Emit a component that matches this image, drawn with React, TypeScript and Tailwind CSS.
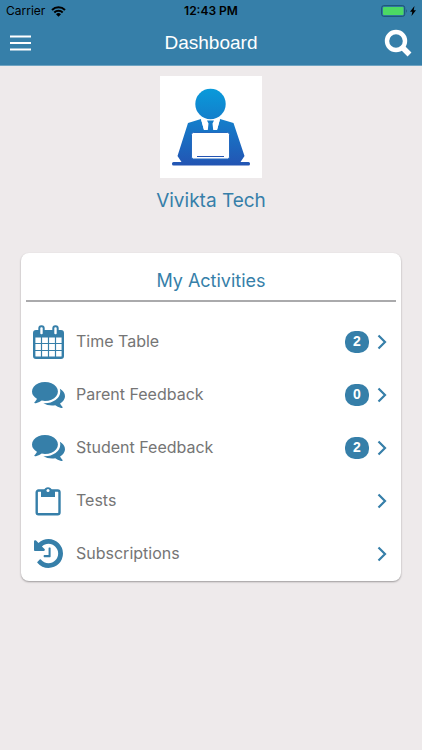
import React from "react";

type Activity = {
  label: string;
  icon: React.ReactNode;
  count?: number;
};

const CalendarIcon = () => (
  <svg viewBox="0 0 31 34" className="w-[31px] h-[34px]" aria-hidden="true">
    <rect x="1.2" y="6.2" width="28.6" height="26.6" rx="1.8" fill="white" stroke="currentColor" strokeWidth="2.4" />
    <path d="M1 6h29v6.500H1z" fill="currentColor" />
    <path d="M8.500 12v20M15.500 12v20M22.500 12v20M2 18.500h27M2 25.500h27" stroke="currentColor" strokeWidth="1.200" />
    <rect x="6.300" y="1.200" width="4.400" height="9" rx="2" fill="white" stroke="currentColor" strokeWidth="2" />
    <rect x="20.300" y="1.200" width="4.400" height="9" rx="2" fill="white" stroke="currentColor" strokeWidth="2" />
  </svg>
);

const CommentsIcon = () => (
  <svg viewBox="0 256 1792 1408" className="w-[33px] h-[26px] shrink-0" fill="currentColor" aria-hidden="true">
    <path d="M1408 768q0 139-94 257t-256.500 186.500T704 1280q-86 0-176-16-124 88-278 128-36 9-86 16h-3q-11 0-20.500-8t-11.500-21q-1-3-1-6.500t.5-6.500 2-6l2.500-5 3.500-5.500 4-5 4.500-5 4-4.500q5-6 23-25t26-29.500 22.500-29 25-38.500 20.500-44q-124-72-195-177T0 768q0-139 94-257t256.500-186.500T704 256t353.500 68.500T1314 511t94 257z" />
    <path d="M1792 1024q0 120-71 224.500T1526 1425q10 24 20.500 44t25 38.500 22.500 29 26 29.500 23 25q1 1 4 4.500t4.500 5 4 5 3.500 5.500l2.500 5 2 6 .5 6.500-1 6.500q-3 14-13 22t-22 7q-50-7-86-16-154-40-278-128-90 16-176 16-271 0-472-132 58 4 88 4 161 0 309-45t264-129q125-92 192-212t67-254q0-77-23-152 129 71 204 178t75 230z" />
  </svg>
);

const ClipboardIcon = () => (
  <svg viewBox="0 0 26 30" className="w-[26px] h-[30px]" aria-hidden="true">
    <rect x="1.700" y="4.500" width="22.800" height="23.800" rx="1.800" fill="none" stroke="currentColor" strokeWidth="2.400" />
    <path d="M6 4h3.200a4 4 0 0 1 7.600 0H20v7H6z" fill="currentColor" />
    <circle cx="13" cy="4.600" r="1.500" fill="white" />
  </svg>
);

const HistoryIcon = () => (
  <svg viewBox="0 128 1536 1536" className="w-[29px] h-[29px]" fill="currentColor" aria-hidden="true">
    <path d="M1536 896q0 156-61 298t-164 245-245 164-298 61q-172 0-327-72.500T177 1387q-7-10-6.500-22.500T179 1344l137-138q10-9 25-9 16 2 23 12 73 95 179 147t225 52q104 0 198.500-40.500T1130 1258t109.500-163.500T1280 896t-40.500-198.500T1130 534 966.500 424.500 768 384q-98 0-188 35.500T420 521l137 138q31 30 14 69-17 40-59 40H64q-26 0-45-19T0 704V256q0-42 40-59 39-17 69 14l130 129q107-101 244.500-156.500T768 128q156 0 298 61t245 164 164 245 61 298z" />
    <path d="M880 608v448q0 32-32 32H544q-32 0-32-32v-44q0-32 32-32h228V608q0-32 32-32h44q32 0 32 32z" />
  </svg>
);

const ChevronIcon = () => (
  <svg viewBox="0 0 10 16" className="w-[10px] h-[16px]" aria-hidden="true">
    <path d="M1.500 1.500L8 8l-6.500 6.500" fill="none" stroke="currentColor" strokeWidth="2.200" />
  </svg>
);

const ProfilePicture = () => (
  <svg viewBox="0 0 102 102" className="w-[102px] h-[102px] bg-white" role="img" aria-label="Profile picture">
    <defs>
      <linearGradient id="person" gradientUnits="userSpaceOnUse" x1="0" y1="12" x2="0" y2="90">
        <stop offset="0" stopColor="#099bdb" />
        <stop offset="1" stopColor="#2354b3" />
      </linearGradient>
    </defs>
    <g fill="url(#person)">
      <circle cx="50.500" cy="28" r="15.200" />
      <path d="M28 47l13-4 3 11h13l3-11 13.500 4 11 33-4 6H21.500l-4-6z" />
      <rect x="12" y="86" width="78" height="3.500" rx="1.500" />
    </g>
    <path d="M41 43.200l5.500 1.300 1.500 3-1 6.500h-3zM60 43.200l-5.500 1.300-1.500 3 1 6.500h3z" fill="white" />
    <path d="M47 44.500h7l-1.500 3 1 9h-6l1-9z" fill="url(#person)" />
    <rect x="31.500" y="56.500" width="38" height="26.500" rx="2" fill="white" stroke="#2369bf" strokeWidth="1" />
    <path d="M37 80.500h27" stroke="#2354b3" strokeWidth="1" />
  </svg>
);

const activities: Activity[] = [
  { label: "Time Table", icon: <CalendarIcon />, count: 2 },
  { label: "Parent Feedback", icon: <CommentsIcon />, count: 0 },
  { label: "Student Feedback", icon: <CommentsIcon />, count: 2 },
  { label: "Tests", icon: <ClipboardIcon /> },
  { label: "Subscriptions", icon: <HistoryIcon /> },
];

function StatusBar() {
  return (
    <div className="grid grid-cols-3 items-center h-[22px] px-[6px] text-black text-[12px] font-['Inter',sans-serif]">
      <div className="flex items-center gap-[6px]">
        <span>Carrier</span>
        <svg viewBox="0 0 15 11" className="w-[15px] h-[11px]" aria-hidden="true">
          <path d="M1 4a9.200 9.200 0 0 1 13 0M3.300 6.500a6 6 0 0 1 8.400 0" fill="none" stroke="currentColor" strokeWidth="2" />
          <path d="M7.500 10.700L5 8.200a3.500 3.500 0 0 1 5 0z" fill="currentColor" />
        </svg>
      </div>
      <span className="text-center font-semibold">12:43 PM</span>
      <div className="flex items-center justify-end gap-[2px]">
        <svg viewBox="0 0 27 12" className="w-[27px] h-3" aria-hidden="true">
          <rect x="0.700" y="0.700" width="23" height="10.600" rx="2" fill="none" stroke="#1b4f70" strokeWidth="1" />
          <rect x="2" y="2" width="20.500" height="8" rx="1" fill="#4cd964" />
          <path d="M25 4q1.500 2 0 4z" fill="#1b4f70" />
        </svg>
        <svg viewBox="0 0 6 10" className="w-[6px] h-[10px]" aria-hidden="true">
          <path d="M4.500 0L0 5.800h2.300L1.500 10 6 4.200H3.700z" fill="currentColor" />
        </svg>
      </div>
    </div>
  );
}

export default function App() {
  return (
    <div className="min-h-screen w-full bg-[#eeeaeb] text-[#367fa9] font-['Inter',sans-serif]">
      {/* Header */}
      <header className="bg-[#367fa9] text-white border-b border-[#6fa4c2]">
        <StatusBar />
        <div className="flex items-center justify-between h-[43px] px-[10px] pb-[2px]">
          <button type="button" aria-label="Menu" className="w-7">
            <svg viewBox="0 0 21 16" className="w-[21px] h-4">
              <path d="M0 1.500h21M0 8h21M0 14.500h21" stroke="currentColor" strokeWidth="2" />
            </svg>
          </button>
          <h1 className="text-[19px] leading-6 font-['Liberation_Sans',sans-serif]">Dashboard</h1>
          <button type="button" aria-label="Search" className="w-7">
            <svg viewBox="0 0 28 28" className="w-7 h-7" fill="none" stroke="currentColor">
              <circle cx="12" cy="12" r="9" strokeWidth="4.400" />
              <path d="M18 18l7.500 7.500" strokeWidth="5.500" />
            </svg>
          </button>
        </div>
      </header>

      <main className="px-[21px]">
        {/* Profile */}
        <section className="flex flex-col items-center pt-[10px]">
          <ProfilePicture />
          <h2 className="mt-[9px] text-[19px] leading-7">Vivikta Tech</h2>
        </section>

        {/* Activities */}
        <section className="mt-[38px] bg-white rounded-lg shadow-[0_1px_2px_rgba(0,0,0,0.35)]">
          <div className="px-[5px]">
            <h3 className="pt-[14px] pb-[5px] text-center text-[18px] leading-7 border-b-2 border-[#aaaaac]">
              My Activities
            </h3>
          </div>
          <ul className="pt-[13px] pb-px">
            {activities.map((item) => (
              <li key={item.label}>
                <button type="button" className="flex items-center w-full h-[53px] pl-[11px] pr-[14px] text-left">
                  <span className="flex justify-center w-8 shrink-0">{item.icon}</span>
                  <span className="flex-1 ml-3 pb-[2px] text-[16px] leading-6 text-[#757575]">{item.label}</span>
                  {item.count !== undefined && (
                    <span className="flex items-center justify-center w-6 h-[22px] mr-2 rounded-[10px] bg-[#367fa9] text-white text-[14px] font-bold font-['Liberation_Sans',sans-serif]">
                      {item.count}
                    </span>
                  )}
                  <ChevronIcon />
                </button>
              </li>
            ))}
          </ul>
        </section>
      </main>
    </div>
  );
}
